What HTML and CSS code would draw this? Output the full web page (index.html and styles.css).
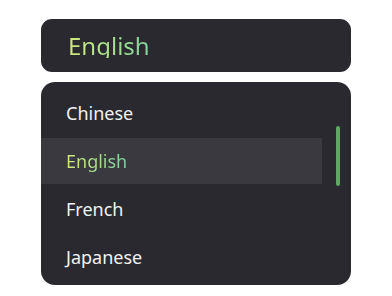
FILE: index.html
```html
<!DOCTYPE html>
<html>
<head>
<meta charset="utf-8">
<link rel="stylesheet" href="styles.css">
</head>
<body>
<div class="wrap">
  <div class="select"><span class="grad big">English</span></div>
  <div class="list">
    <div class="items">
      <div class="item">Chinese</div>
      <div class="item active"><span class="grad">English</span></div>
      <div class="item">French</div>
      <div class="item">Japanese</div>
    </div>
    <div class="scrollbar"></div>
  </div>
</div>
</body>
</html>
```
FILE: styles.css
```css
html, body {
  margin: 0;
  padding: 0;
  background: #ffffff;
}
body {
  font-family: "Noto Sans", "Open Sans", sans-serif;
}
.wrap {
  width: 310px;
  padding: 19px 0 0 41px;
  display: flex;
  flex-direction: column;
  gap: 10px;
}
.select {
  height: 53px;
  background: #2a292f;
  border-radius: 11px;
  display: flex;
  align-items: center;
  padding-left: 27px;
  box-sizing: border-box;
}
.grad {
  background: linear-gradient(90deg, #d2ea78 0%, #a8e08a 50%, #7ed6a2 100%);
  -webkit-background-clip: text;
  background-clip: text;
  color: transparent;
}
.big {
  font-size: 24px;
  line-height: 1;
}
.list {
  height: 203px;
  background: #2a292f;
  border-radius: 14px;
  position: relative;
  overflow: hidden;
}
.items {
  padding-top: 8px;
  width: 281px;
  display: flex;
  flex-direction: column;
  gap: 2px;
}
.item {
  height: 46px;
  display: flex;
  align-items: center;
  padding-left: 25px;
  font-size: 18px;
  color: #f2f2f2;
}
.item.active {
  background: #3a393f;
}
.scrollbar {
  position: absolute;
  left: 295px;
  top: 44px;
  width: 4px;
  height: 60px;
  border-radius: 2px;
  background: #62a464;
}
```
